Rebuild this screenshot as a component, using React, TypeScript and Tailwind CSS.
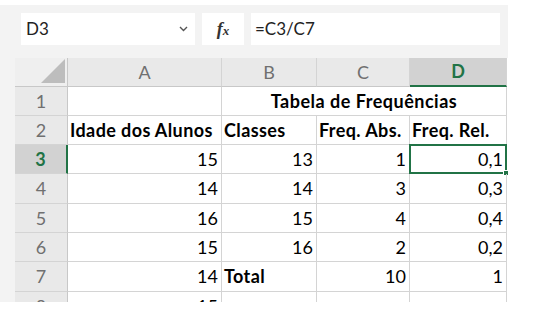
import React from 'react';

const cols = ['w-[154px]', 'w-[95px]', 'w-[93px]', 'w-[97px]'];

type Row = { n: string; h: string; cells: (string | null)[]; bold?: boolean[] };

const rows: Row[] = [
  { n: '2', h: 'h-[29px]', cells: ['Idade dos Alunos', 'Classes', 'Freq. Abs.', 'Freq. Rel.'], bold: [true, true, true, true] },
  { n: '3', h: 'h-[29px]', cells: ['15', '13', '1', '0,1'] },
  { n: '4', h: 'h-[30px]', cells: ['14', '14', '3', '0,3'] },
  { n: '5', h: 'h-[29px]', cells: ['16', '15', '4', '0,4'] },
  { n: '6', h: 'h-[29px]', cells: ['15', '16', '2', '0,2'] },
  { n: '7', h: 'h-[30px]', cells: ['14', 'Total', '10', '1'], bold: [false, true, false, false] },
  { n: '8', h: 'h-[29px]', cells: ['15', null, null, null] },
];

function RowHead({ n, h }: { n: string; h: string }) {
  const sel = n === '3';
  return (
    <div
      className={`${h} w-[53px] shrink-0 flex items-center justify-center border-b border-[#d4d4d4] ${
        sel ? 'bg-[#d2d2d2] text-[#217346] font-bold border-r-2 border-r-[#217346]' : 'bg-[#e9e9e9] text-[#707070] border-r border-r-[#c8c8c8]'
      }`}
    >
      {n}
    </div>
  );
}

export default function App() {
  return (
    <div className="w-[534px] h-[313px] bg-white overflow-hidden font-['Lato',sans-serif] text-[18px] text-black">
      <div className="w-[508px] h-[297px] mt-[5px] bg-[#f3f3f3] overflow-hidden">
        {/* formula bar */}
        <div className="flex h-[53px] pt-[8px] pl-[21px] gap-[7px]">
          <div className="w-[174px] h-[32px] bg-white flex items-center justify-between pl-[5px] pr-[7px] text-[17px] text-[#222]">
            <span>D3</span>
            <svg width="9" height="6" viewBox="0 0 9 6">
              <path d="M1 1 L4.5 4.5 L8 1" fill="none" stroke="#555" strokeWidth="1.4" />
            </svg>
          </div>
          <div className="w-[42px] h-[32px] bg-white flex items-center justify-center font-['Liberation_Serif',serif] italic text-[#333]">
            <span className="text-[18px] font-bold">f</span>
            <span className="text-[13px] mt-[3px] font-bold">x</span>
          </div>
          <div className="w-[249px] h-[32px] bg-white flex items-center pl-[4px] text-[17px] text-[#222]">=C3/C7</div>
        </div>

        {/* grid */}
        <div className="ml-[15px] bg-white">
          <div className="flex h-[29px] text-[#707070]">
            <div className="w-[53px] bg-[#efefef] border-r border-[#c8c8c8] border-b border-b-[#c8c8c8] flex items-end justify-end pr-[2px] pb-[3px]">
              <svg width="24" height="24" viewBox="0 0 24 24">
                <path d="M24 0 L24 24 L0 24 Z" fill="#bdbdbd" />
              </svg>
            </div>
            {['A', 'B', 'C'].map((c, i) => (
              <div
                key={c}
                className={`${cols[i]} bg-[#e9e9e9] border-r border-[#d4d4d4] border-b border-b-[#c8c8c8] flex items-center justify-center`}
              >
                {c}
              </div>
            ))}
            <div className={`${cols[3]} bg-[#d2d2d2] border-r border-[#d4d4d4] border-b-2 border-b-[#217346] text-[#217346] font-bold flex items-center justify-center`}>
              D
            </div>
          </div>

          <div className="flex h-[29px]">
            <RowHead n="1" h="h-[29px]" />
            <div className={`${cols[0]} border-r border-b border-[#d4d4d4]`} />
            <div className="w-[285px] border-r border-b border-[#d4d4d4] flex items-center justify-center font-bold tracking-[0.5px]">
              Tabela de Frequências
            </div>
          </div>

          {rows.map((r) => (
            <div key={r.n} className={`flex ${r.h}`}>
              <RowHead n={r.n} h={r.h} />
              {r.cells.map((c, i) => {
                const isNum = !r.bold?.[i];
                const sel = r.n === '3' && i === 3;
                return (
                  <div
                    key={i}
                    className={`${cols[i]} relative border-r border-b border-[#d4d4d4] flex items-center whitespace-nowrap ${
                      isNum ? 'justify-end pr-[3px]' : 'justify-start pl-[2px] font-bold tracking-[0.4px]'
                    }`}
                  >
                    {c}
                    {sel && (
                      <div className="absolute -left-[1px] -top-[1px] -right-[1px] -bottom-[1px] border-2 border-[#217346]">
                        <div className="absolute -right-[4px] -bottom-[4px] w-[6px] h-[6px] bg-[#217346] border border-white" />
                      </div>
                    )}
                  </div>
                );
              })}
            </div>
          ))}
        </div>
      </div>
    </div>
  );
}
